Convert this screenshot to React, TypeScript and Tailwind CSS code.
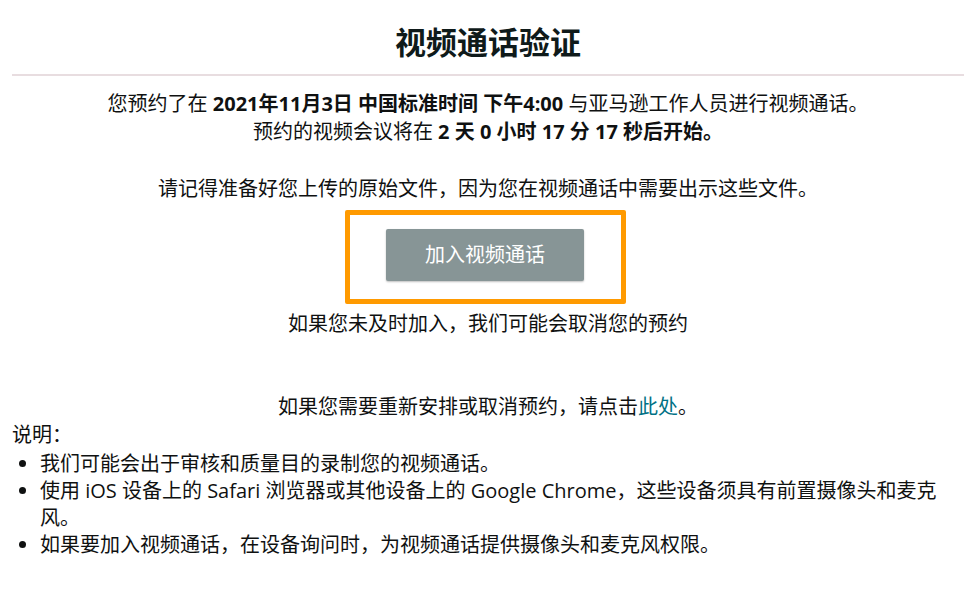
import React from 'react';

const bullets = [
  '我们可能会出于审核和质量目的录制您的视频通话。',
  '使用 iOS 设备上的 Safari 浏览器或其他设备上的 Google Chrome，这些设备须具有前置摄像头和麦克风。',
  '如果要加入视频通话，在设备询问时，为视频通话提供摄像头和麦克风权限。',
];

export default function App() {
  return (
    <div
      className="min-h-[592px] bg-white px-3 pt-[22px] text-[#0f1111]"
      style={{ fontFamily: '"Open Sans", "Noto Sans CJK SC", sans-serif' }}
    >
      {/* Header */}
      <h1 className="text-center text-[31px] font-bold leading-[40px] text-[#0f1a1a]">视频通话验证</h1>
      <div className="mt-[12px] h-[2px] bg-[#e8dde0]" />

      {/* Appointment info */}
      <div className="mt-[14px] text-center text-[20px] leading-[28px]">
        <p>
          您预约了在 <strong className="font-bold">2021年11月3日 中国标准时间 下午4:00</strong> 与亚马逊工作人员进行视频通话。
        </p>
        <p>
          预约的视频会议将在 <strong className="font-bold">2 天 0 小时 17 分 17 秒后开始。</strong>
        </p>
        <p className="mt-[29px]">请记得准备好您上传的原始文件，因为您在视频通话中需要出示这些文件。</p>

        <div className="mt-[7px] flex justify-center">
          <div className="ml-[-6px] flex h-[94px] w-[281px] items-start justify-center rounded-[2px] border-[5px] border-[#ff9a00] pt-[14px]">
            <button
              type="button"
              className="h-[52px] w-[198px] rounded-[2px] bg-[#879596] text-[20px] text-white shadow-[0_1px_2px_rgba(0,0,0,0.25)]"
            >
              加入视频通话
            </button>
          </div>
        </div>

        <p className="mt-[6px]">如果您未及时加入，我们可能会取消您的预约</p>
        <p className="mt-[55px]">
          如果您需要重新安排或取消预约，请点击<a className="text-[#007185]">此处</a>。
        </p>
      </div>

      {/* Notes */}
      <div className="text-[20px]">
        <p className="leading-[28px]">说明：</p>
        <ul className="mt-[1px] list-disc pl-[28px] pr-[20px] leading-[27px]">
          {bullets.map((b) => (
            <li key={b}>{b}</li>
          ))}
        </ul>
      </div>
    </div>
  );
}
